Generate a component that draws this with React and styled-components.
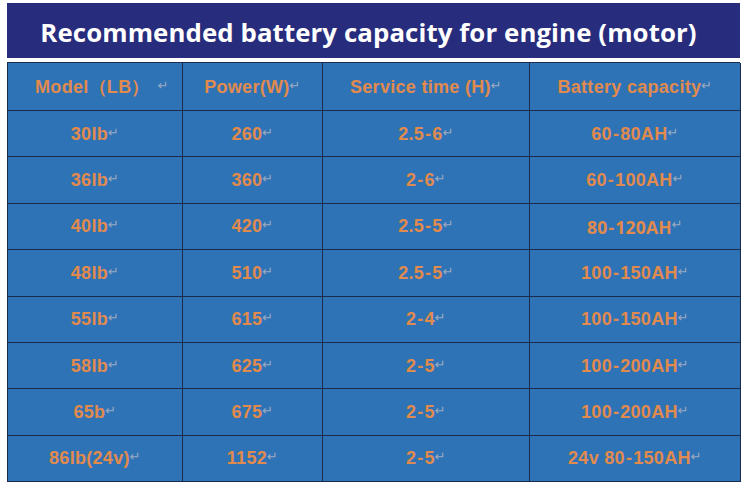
import * as React from 'react';
import styled, { createGlobalStyle } from 'styled-components';

const GlobalStyle = createGlobalStyle`
    html, body {
        margin: 0;
        padding: 0;
        background: #ffffff;
    }
`;

const rows = [
    ['30lb', '260', '2.5-6', '60-80AH'],
    ['36lb', '360', '2-6', '60-100AH'],
    ['40lb', '420', '2.5-5', '80-120AH'],
    ['48lb', '510', '2.5-5', '100-150AH'],
    ['55lb', '615', '2-4', '100-150AH'],
    ['58lb', '625', '2-5', '100-200AH'],
    ['65b', '675', '2-5', '100-200AH'],
    ['86lb(24v)', '1152', '2-5', '24v 80-150AH'],
];

const headers = ['Model（LB）', 'Power(W)', 'Service time (H)', 'Battery capacity'];

const Page = styled.div`
    width: 749px;
    height: 487px;
    padding: 3px 9px 0 7px;
    box-sizing: border-box;
    display: flex;
    flex-direction: column;
    gap: 4px;
`;

const TitleBar = styled.div`
    height: 55px;
    background: #272c7d;
    display: flex;
    align-items: center;
    justify-content: center;
    color: #ffffff;
    font-family: "Open Sans", "Noto Sans", sans-serif;
    font-weight: 700;
    font-size: 25.8px;
    letter-spacing: 0.1px;
    padding: 3px 10px 0 0;
    box-sizing: border-box;
`;

const Table = styled.div`
    display: grid;
    grid-template-columns: 175px 140px 207px 211px;
    grid-template-rows: 48px repeat(8, 46.4px);
    background: #2e73b6;
    border-top: 1.5px solid #1b2b4c;
    border-left: 1.5px solid #1b2b4c;
    box-sizing: border-box;
`;

const Cell = styled.div`
    display: flex;
    align-items: center;
    justify-content: center;
    border-right: 1.5px solid #1b2b4c;
    border-bottom: 1.5px solid #1b2b4c;
    color: #e18a4d;
    font-family: ${p => (p.$alt ? '"Open Sans", sans-serif' : '"Liberation Sans", Arial, sans-serif')};
    font-weight: 700;
    font-size: ${p => (p.$alt ? '17.5px' : '18px')};
    letter-spacing: ${p => (p.$alt ? '0.2px' : '0.3px')};
    padding-top: ${p => (p.$head ? '1px' : '1px')};
    padding-left: ${p => (p.$shift ? '14px' : '0')};
    box-sizing: border-box;
    white-space: nowrap;
`;

const Dash = styled.span`
    margin: 0 1px;
`;

const Mark = styled.span`
    color: #c7c2c6;
    font-family: "DejaVu Sans", sans-serif;
    font-weight: 400;
    font-size: 13px;
    opacity: 0.7;
    margin-left: ${p => (p.$gap ? '8px' : '0')};
    position: relative;
    top: -2px;
`;

const withDashes = v =>
    v.split('-').map((part, i) => (
        <React.Fragment key={i}>
            {i > 0 && <Dash>-</Dash>}
            {part}
        </React.Fragment>
    ));

const App = () => {
    return (
        <React.Fragment>
            <GlobalStyle />
            <Page>
                <TitleBar>Recommended battery capacity for engine (motor)</TitleBar>
                <Table>
                    {headers.map((h, i) => (
                        <Cell key={h} $head $shift={i === 0}>
                            {h}
                            <Mark $gap={i === 0}>↵</Mark>
                        </Cell>
                    ))}
                    {rows.map(row =>
                        row.map((v, i) => (
                            <Cell key={row[0] + i} $alt={v === '80-120AH'}>
                                {withDashes(v)}
                                <Mark>↵</Mark>
                            </Cell>
                        ))
                    )}
                </Table>
            </Page>
        </React.Fragment>
    );
};

export default App;
